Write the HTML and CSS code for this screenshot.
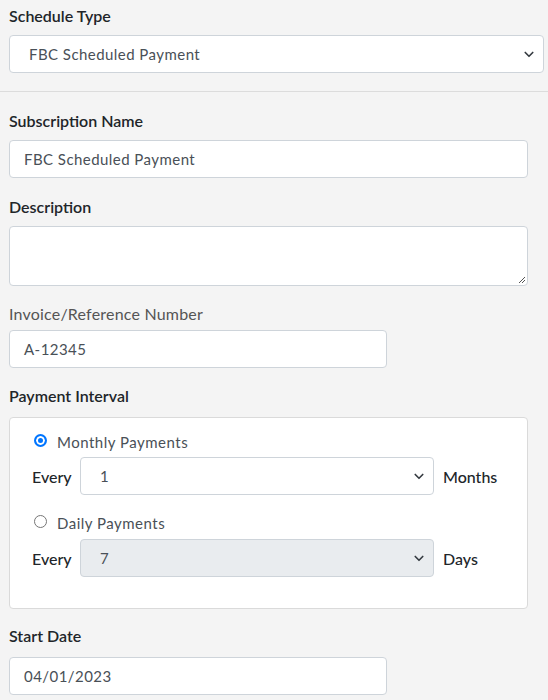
FILE: index.html
```html
<!DOCTYPE html>
<html>
<head>
<meta charset="utf-8">
<link rel="stylesheet" href="styles.css">
</head>
<body>
<form class="form">
  <div class="group">
    <label class="label">Schedule Type</label>
    <div class="select wide"><span>FBC Scheduled Payment</span><svg class="chev" viewBox="0 0 16 16"><path d="M3 6l5 5 5-5" fill="none" stroke="#343a40" stroke-width="2.2" stroke-linecap="round" stroke-linejoin="round"/></svg></div>
  </div>
  <hr class="rule">
  <div class="group">
    <label class="label">Subscription Name</label>
    <div class="input full">FBC Scheduled Payment</div>
  </div>
  <div class="group g2">
    <label class="label">Description</label>
    <div class="textarea full"><svg class="grip" viewBox="0 0 8 8"><path d="M7 1L1 7M7 4L4 7" stroke="#555" stroke-width="1"/></svg></div>
  </div>
  <div class="group g3">
    <label class="label light">Invoice/Reference Number</label>
    <div class="input half">A-12345</div>
  </div>
  <div class="group g4">
    <label class="label">Payment Interval</label>
    <div class="box">
      <div class="radio-row">
        <span class="radio on"></span><span class="radio-text">Monthly Payments</span>
      </div>
      <div class="every">
        <span class="every-l">Every</span>
        <div class="select mid"><span>1</span><svg class="chev" viewBox="0 0 16 16"><path d="M3 6l5 5 5-5" fill="none" stroke="#343a40" stroke-width="2.2" stroke-linecap="round" stroke-linejoin="round"/></svg></div>
        <span class="every-r">Months</span>
      </div>
      <div class="radio-row r2">
        <span class="radio"></span><span class="radio-text">Daily Payments</span>
      </div>
      <div class="every e2">
        <span class="every-l">Every</span>
        <div class="select mid disabled"><span>7</span><svg class="chev" viewBox="0 0 16 16"><path d="M3 6l5 5 5-5" fill="none" stroke="#343a40" stroke-width="2.2" stroke-linecap="round" stroke-linejoin="round"/></svg></div>
        <span class="every-r">Days</span>
      </div>
    </div>
  </div>
  <div class="group g5">
    <label class="label">Start Date</label>
    <div class="input half">04/01/2023</div>
  </div>
</form>
</body>
</html>
```
FILE: styles.css
```css
html, body {
  margin: 0;
  padding: 0;
  background: #f4f4f4;
}
body {
  font-family: "Lato", "Open Sans", sans-serif;
  color: #212529;
  width: 548px;
  height: 700px;
  overflow: hidden;
}
.form {
  padding: 4px 4px 0 9px;
  display: flex;
  flex-direction: column;
}
.group {
  display: flex;
  flex-direction: column;
}
.label {
  font-size: 16px;
  line-height: 24px;
  font-weight: 600;
  color: #212529;
  margin-bottom: 7px;
}
.label.light {
  font-weight: 400;
  color: #555;
  margin-bottom: 4px;
  letter-spacing: 0.2px;
}
.rule {
  border: 0;
  border-top: 1px solid #dcdcdc;
  margin: 18px -4px 17px -9px;
  height: 0;
}
.select, .input, .textarea {
  box-sizing: border-box;
  background: #fff;
  border: 1px solid #ced4da;
  border-radius: 4px;
  font-size: 15px;
  letter-spacing: 0.45px;
  color: #495057;
  height: 38px;
  display: flex;
  align-items: center;
}
.select {
  padding: 0 8px 0 19px;
  justify-content: space-between;
}
.select.wide { width: 535px; }
.input { padding: 0 14px; }
.full { width: 519px; }
.half { width: 378px; }
.textarea {
  height: 60px;
  position: relative;
}
.grip {
  position: absolute;
  right: 1px;
  bottom: 1px;
  width: 8px;
  height: 8px;
}
.chev {
  width: 12px;
  height: 12px;
}
.group.g2 { margin-top: 17px; }
.group.g3 { margin-top: 16px; }
.group.g4 { margin-top: 16px; }
.group.g4 .label { margin-bottom: 9px; }
.group.g5 { margin-top: 15px; }
.group.g5 .label { margin-bottom: 9px; }
.box {
  box-sizing: border-box;
  width: 519px;
  height: 192px;
  background: #fff;
  border: 1px solid #dadada;
  border-radius: 4px;
  padding: 12px 0 0 22px;
}
.radio-row {
  display: flex;
  align-items: center;
  height: 24px;
  margin-left: 2px;
}
.radio-row.r2 { margin-top: 16px; }
.radio {
  box-sizing: border-box;
  width: 13px;
  height: 13px;
  border-radius: 50%;
  border: 1px solid #767676;
  background: #fff;
  margin-right: 10px;
  margin-top: -4px;
}
.radio.on {
  border: 2px solid #0075ff;
  box-shadow: inset 0 0 0 2px #fff;
  background: #0075ff;
}
.radio-text {
  font-size: 15px;
  color: #495057;
  letter-spacing: 0.5px;
}
.every {
  display: flex;
  align-items: center;
  margin-top: 3px;
}
.every.e2 { margin-top: 4px; }
.every-l {
  font-size: 16px;
  font-weight: 500;
  width: 48px;
}
.every-r {
  font-size: 16px;
  font-weight: 500;
  margin-left: 9px;
}
.select.mid { width: 354px; }
.select.disabled { background: #e9ecef; }
```
